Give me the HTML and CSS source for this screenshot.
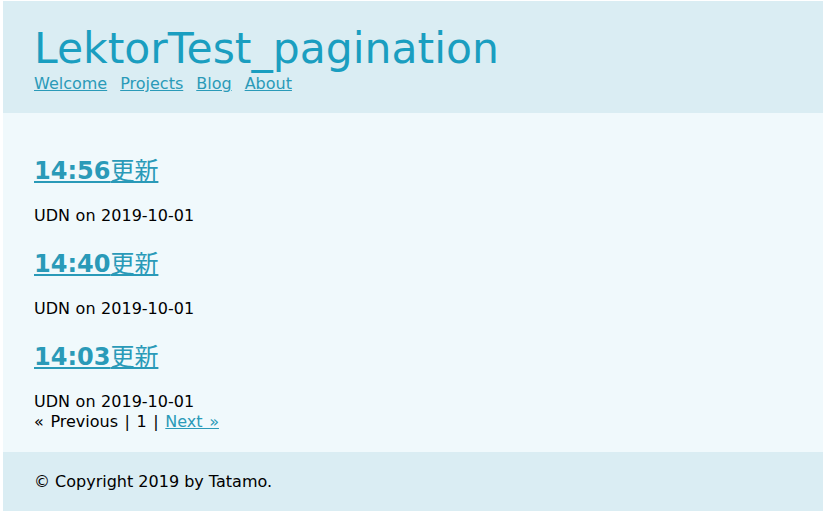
FILE: index.html
```html
<!DOCTYPE html>
<html lang="ja">
<head>
<meta charset="utf-8">
<title>LektorTest_pagination</title>
<link rel="stylesheet" href="styles.css">
</head>
<body>
<div class="page">
  <header class="site-header">
    <h1 class="site-title">LektorTest_pagination</h1>
    <nav class="site-nav">
      <a href="#">Welcome</a>
      <a href="#">Projects</a>
      <a href="#">Blog</a>
      <a href="#">About</a>
    </nav>
  </header>
  <main class="site-main">
    <article class="post">
      <h2 class="post-title"><a href="#">14:56<span class="cjk">更新</span></a></h2>
      <p class="post-meta">UDN on 2019-10-01</p>
    </article>
    <article class="post">
      <h2 class="post-title"><a href="#">14:40<span class="cjk">更新</span></a></h2>
      <p class="post-meta">UDN on 2019-10-01</p>
    </article>
    <article class="post">
      <h2 class="post-title"><a href="#">14:03<span class="cjk">更新</span></a></h2>
      <p class="post-meta last">UDN on 2019-10-01</p>
    </article>
    <div class="pagination">« Previous | 1 | <a href="#">Next »</a></div>
  </main>
  <footer class="site-footer">© Copyright 2019 by Tatamo.</footer>
</div>
</body>
</html>
```

FILE: styles.css
```css
html, body {
  margin: 0;
  padding: 0;
  background: #ffffff;
}
body {
  padding: 1px 6px 6px 3px;
  font-family: "DejaVu Sans", Verdana, "Noto Sans CJK JP", sans-serif;
  font-size: 16px;
  color: #000;
}
.page {
  display: flex;
  flex-direction: column;
}
a {
  color: #2a9ab8;
}
.site-header {
  background: #daedf3;
  padding: 22px 31px 20px;
  height: 112px;
  box-sizing: border-box;
}
.site-title {
  margin: 0;
  font-size: 42.5px;
  font-weight: normal;
  line-height: 51px;
  color: #1a9ec0;
}
.site-nav {
  display: flex;
  gap: 13px;
  font-size: 16px;
  line-height: 20px;
}
.site-main {
  background: #f0f9fc;
  padding: 41px 31px 20px;
  height: 339px;
  box-sizing: border-box;
}
.post-title {
  margin: 0;
  font-size: 24px;
  line-height: 30px;
  font-weight: bold;
}
.post-title a {
  color: #2a9ab8;
}
.cjk {
  font-family: "Noto Sans CJK JP", sans-serif;
  font-weight: normal;
}
.post-meta {
  margin: 20px 0 21px;
  line-height: 20px;
  word-spacing: 0.5px;
}
.post-meta.last {
  margin-bottom: 0;
}
.pagination {
  line-height: 20px;
  word-spacing: 1.5px;
}
.site-footer {
  background: #daedf3;
  height: 59px;
  box-sizing: border-box;
  padding: 20px 31px;
  line-height: 20px;
}
```
